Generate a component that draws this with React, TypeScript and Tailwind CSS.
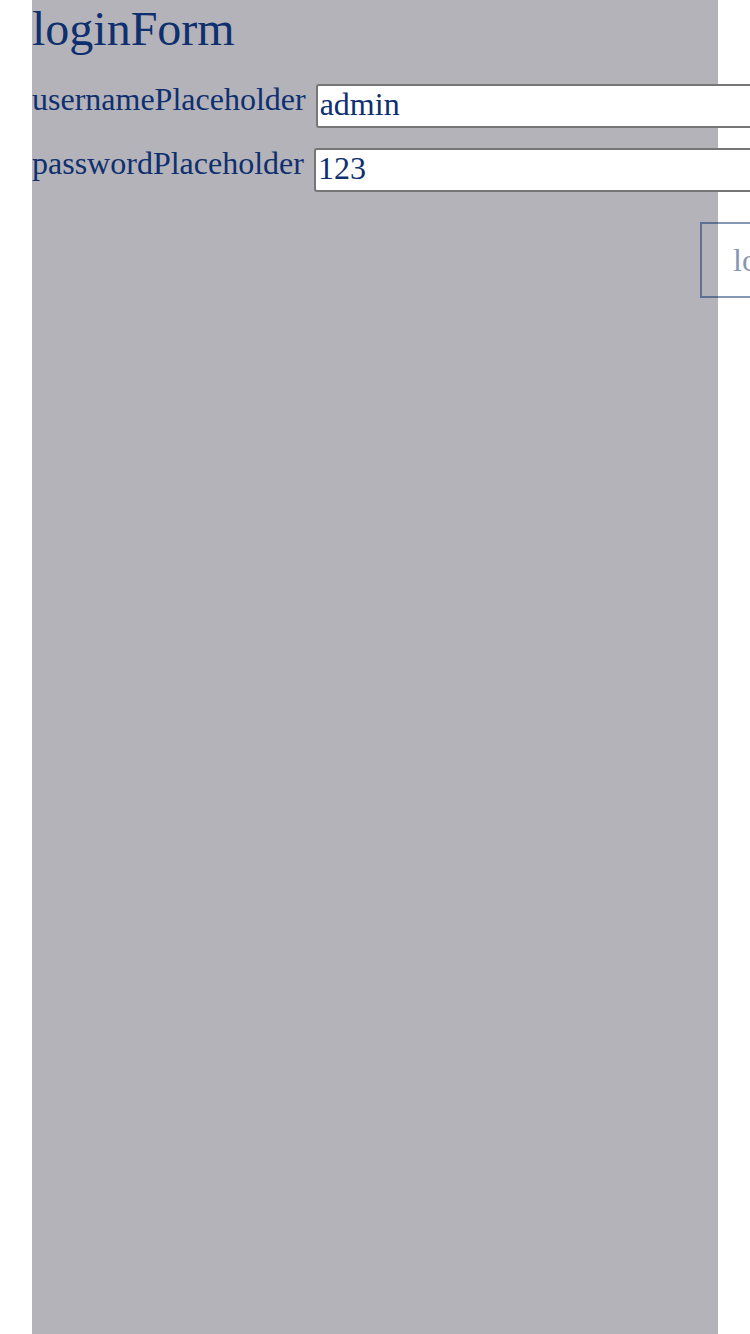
import React from "react";

const App: React.FC = () => {
  return (
    <div className="w-[750px] h-[1334px] overflow-hidden bg-white font-['Liberation_Serif',serif] text-[#0f2f6e]">
      <div className="ml-8 w-[686px] h-full bg-[#b4b3b9]">
        <h1 className="text-[48px] leading-[56px] pt-[1px]">loginForm</h1>
        <div className="mt-[24px] flex items-start gap-[10px] whitespace-nowrap">
          <label className="text-[32px] leading-[37px]">usernamePlaceholder</label>
          <input
            className="mt-[3px] h-[44px] w-[460px] shrink-0 rounded-[3px] border-2 border-[#767676] bg-white px-[2px] pt-0 pb-[3px] text-[32px] leading-[37px] outline-none"
            defaultValue="admin"
          />
        </div>
        <div className="mt-[17px] flex items-start gap-[10px] whitespace-nowrap">
          <label className="text-[32px] leading-[37px]">passwordPlaceholder</label>
          <input
            className="mt-[3px] h-[44px] w-[460px] shrink-0 rounded-[3px] border-2 border-[#767676] bg-white px-[2px] pt-0 pb-[3px] text-[32px] leading-[37px] outline-none"
            defaultValue="123"
          />
        </div>
        <div className="mt-[30px] flex whitespace-nowrap">
          <button className="ml-[668px] h-[76px] shrink-0 border-2 border-[#0f2f6e] px-[31px] text-[32px] leading-[37px] opacity-50">
            login
          </button>
        </div>
      </div>
    </div>
  );
};

export default App;
